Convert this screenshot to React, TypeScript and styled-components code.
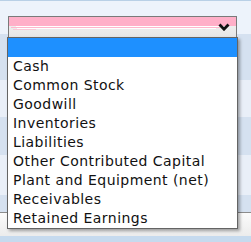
import React from "react";
import styled, { createGlobalStyle } from "styled-components";

const Global = createGlobalStyle`
  html, body { margin: 0; padding: 0; background: #edf3fb; }
  body { font-family: "DejaVu Sans", Verdana, sans-serif; }
`;

const Page = styled.div`
  position: relative;
  width: 251px;
  height: 242px;
  overflow: hidden;
  background: #edf3fb;
  border-top: 1px solid #b9d0e6;
  box-sizing: border-box;
  display: flex;
  flex-direction: column;
`;

const Header = styled.div`
  height: 33px;
  flex: none;
  display: flex;
  align-items: flex-start;
  padding: 15px 0 0 8px;
  box-sizing: border-box;
`;

const SelectWrap = styled.div`
  position: relative;
  z-index: 2;
  width: 229px;
`;

const SelectBox = styled.div`
  height: 22px;
  box-sizing: border-box;
  border: 1px solid #7a7a7a;
  display: flex;
  flex-direction: column;
  position: relative;
  background: linear-gradient(#f4f4f4, #e6e6e6);
`;

const Pink = styled.div`
  height: 9px;
  background: #ffafc8;
`;

const Streak = styled.div<{ $color: string; $left: number; $right: number }>`
  height: 1px;
  margin: 0 ${(p) => p.$right}px 0 ${(p) => p.$left}px;
  background: ${(p) => p.$color};
`;

const Chevron = styled.svg`
  position: absolute;
  right: 6px;
  top: 6px;
`;

const List = styled.ul`
  position: absolute;
  left: -1px;
  top: 21px;
  width: 229px;
  margin: 0;
  padding: 0;
  list-style: none;
  background: #fff;
  border: 1px solid #646464;
  box-shadow: 2px 2px 3px rgba(0, 0, 0, 0.35);
`;

const Option = styled.li<{ $selected?: boolean }>`
  height: 19px;
  line-height: 19px;
  padding-left: 5px;
  font-size: 14px;
  letter-spacing: 0.45px;
  color: #111;
  white-space: nowrap;
  background: ${(p) => (p.$selected ? "#1e90ff" : "transparent")};
`;

const Stripe = styled.div<{ $h: number; $dark?: boolean }>`
  height: ${(p) => p.$h}px;
  flex: none;
  background: ${(p) => (p.$dark ? "#d5e1f0" : "#e9eff8")};
`;

const Footer = styled.div`
  height: 23px;
  flex: none;
  border-top: 1px solid #8c8c8c;
  background: linear-gradient(#fbfbfb, #ececec);
`;

const BottomBand = styled.div`
  flex: 1;
  background: #c6daee;
`;

const options = [
  "",
  "Cash",
  "Common Stock",
  "Goodwill",
  "Inventories",
  "Liabilities",
  "Other Contributed Capital",
  "Plant and Equipment (net)",
  "Receivables",
  "Retained Earnings",
];

export default function App() {
  return (
    <>
      <Global />
      <Page>
        <Header>
          <SelectWrap>
            <SelectBox>
              <Pink />
              <Streak $color="#ffffff" $left={7} $right={14} />
              <Streak $color="#ffb7cc" $left={2} $right={16} />
              <Streak $color="#ffffff" $left={8} $right={20} />
              <Streak $color="#f8c8d6" $left={4} $right={200} />
              <Chevron width="12" height="8" viewBox="0 0 12 8">
                <polyline
                  points="1.5,1.5 6,6.2 10.5,1.5"
                  fill="none"
                  stroke="#111"
                  strokeWidth="2.8"
                />
              </Chevron>
            </SelectBox>
            <List>
              {options.map((o, i) => (
                <Option key={i} $selected={i === 0}>
                  {o}
                </Option>
              ))}
            </List>
          </SelectWrap>
        </Header>
        <Stripe $h={46} $dark />
        <Stripe $h={37} />
        <Stripe $h={38} $dark />
        <Stripe $h={40} />
        <Stripe $h={17} $dark />
        <Footer />
        <BottomBand />
      </Page>
    </>
  );
}
